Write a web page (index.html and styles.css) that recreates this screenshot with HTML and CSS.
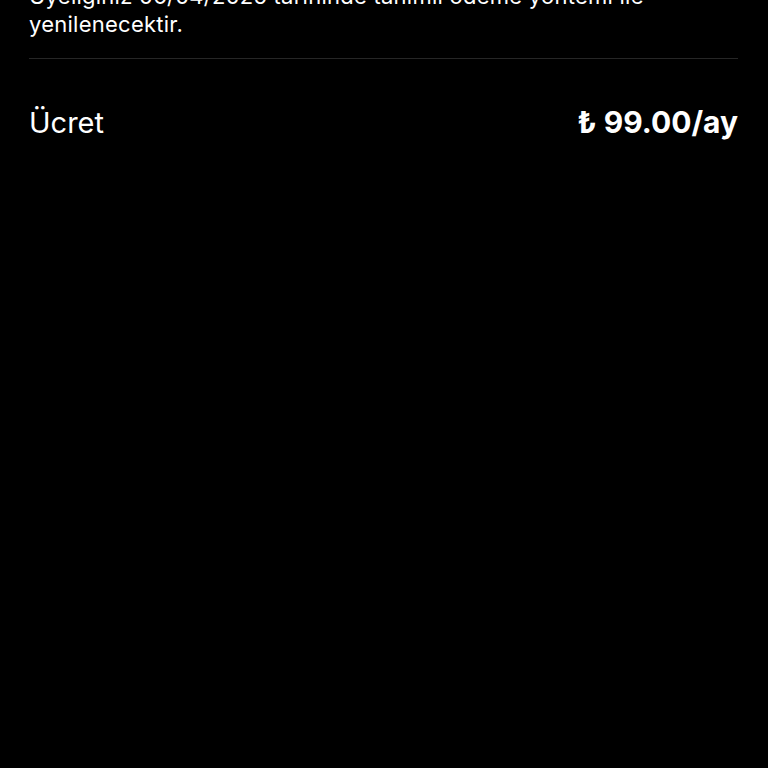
FILE: index.html
```html
<!DOCTYPE html>
<html lang="tr">
<head>
    <meta charset="UTF-8">
    <meta name="viewport" content="width=device-width, initial-scale=1.0">
    <title>Üyelik</title>
    <link rel="stylesheet" href="styles.css">
</head>
<body>
    <div class="subscription">
        <div class="renewBox">
            <p class="renewNote">Üyeliğiniz 06/04/2025 tarihinde tanımlı ödeme yöntemi ile yenilenecektir.</p>
        </div>
        <div class="priceRow">
            <span class="priceLabel">Ücret</span>
            <span class="priceValue">₺ 99.00/ay</span>
        </div>
    </div>
</body>
</html>
```

FILE: styles.css
```css
html, body {
    background-color: #000;
}

body {
    margin: 0;
    font-family: 'Inter', 'Noto Sans', sans-serif;
    color: #fff;
}

.subscription {
    padding: 0 30px 0 29px;
    margin-top: -18px;
}

.renewBox {
    padding-bottom: 20px;
    border-bottom: 1px solid #262626;
}

.renewNote {
    margin: 0;
    max-width: 670px;
    font-size: 22px;
    line-height: 28px;
    letter-spacing: 0.25px;
}

.priceRow {
    display: flex;
    justify-content: space-between;
    align-items: center;
    padding-top: 45px;
}

.priceLabel {
    font-size: 29px;
}

.priceValue {
    font-size: 30px;
    font-weight: 700;
}
```
